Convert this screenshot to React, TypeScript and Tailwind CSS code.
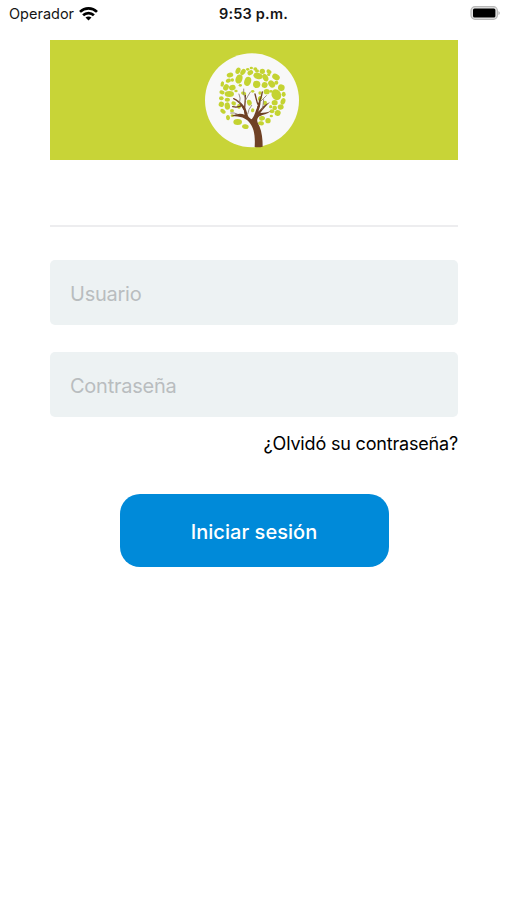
import React from 'react';

// [cx, cy, rx, ry, rotation]
const LEAVES: number[][] = [
  [90, 75, 10, 7, -15], [114, 62, 7, 10, 25], [129, 66, 7, 10, 35], [151, 68, 9, 7, -35], [143, 58, 5, 4, 0],
  [154, 54, 5, 4, 0], [166, 57, 6, 5, 0], [174, 78, 14, 9, 15], [171, 63, 6, 5, 0], [187, 64, 8, 8, 0],
  [207, 65, 8, 6, 30], [228, 81, 12, 9, 30], [206, 74, 5, 4, 0], [196, 83, 8, 12, -30],
  [117, 87, 10, 14, 20], [143, 94, 10, 14, 20], [85, 92, 8, 6, -20], [97, 90, 5, 5, 0], [67, 102, 5, 8, 15],
  [97, 113, 10, 8, -15], [78, 112, 8, 10, 30], [121, 106, 5, 4, 0], [170, 103, 11, 11, 0], [194, 105, 9, 9, 20],
  [215, 102, 9, 12, -40], [229, 98, 6, 6, 0], [244, 113, 10, 10, 10], [88, 132, 14, 9, 0], [66, 127, 8, 6, 15],
  [108, 123, 5, 4, 0], [64, 145, 7, 6, 0], [200, 125, 9, 8, 0], [229, 134, 14, 17, -25], [251, 133, 6, 8, 0],
  [213, 124, 5, 4, 0], [180, 129, 5, 5, 0], [131, 130, 8, 5, 20], [158, 124, 5, 4, 0], [82, 149, 8, 6, 0],
  [64, 163, 8, 8, 20], [82, 168, 8, 11, -10], [101, 160, 7, 6, 20], [148, 158, 7, 9, -20], [180, 145, 6, 8, 30],
  [195, 159, 6, 7, 0], [224, 158, 9, 8, 0], [249, 154, 7, 10, 20], [242, 171, 9, 8, -20], [224, 174, 7, 7, 0],
  [212, 170, 5, 5, 0], [69, 184, 9, 6, 35], [96, 182, 6, 5, 0], [117, 169, 6, 8, 0], [158, 181, 5, 6, 20],
  [216, 184, 7, 6, 0], [233, 189, 9, 9, 20], [84, 203, 6, 8, -10], [113, 216, 13, 9, 0], [136, 230, 10, 7, 10],
  [97, 197, 5, 4, 0], [186, 205, 9, 7, -15], [204, 212, 8, 8, 0], [183, 220, 9, 6, 10], [214, 198, 5, 4, 0],
];

const TreeLogo: React.FC = () => (
  <svg className="w-[95px] h-[95px]" viewBox="15 9 285 285" fill="none">
    <circle cx="156" cy="151" r="141" fill="#f8f8f8" />
    <g fill="#c4d332">
      {LEAVES.map(([cx, cy, rx, ry, angle], i) => (
        <ellipse key={i} cx={cx} cy={cy} rx={rx} ry={ry} transform={`rotate(${angle} ${cx} ${cy})`} />
      ))}
    </g>
    <path
      d="M164 291C166 259 163 234 147 216C137 204 123 199 94 198C112 190 123 190 134 194C132 177 127 166 113 150C131 163 139 176 143 195C145 201 149 205 155 208C161 202 164 193 168 181C173 169 178 160 180 140C185 160 179 171 175 185C184 174 194 163 210 156C197 170 189 177 181 189C193 188 201 188 212 183C201 195 183 193 175 202C168 210 173 218 178 228C186 247 188 268 188 290C180 292 172 292 164 291Z"
      fill="#6f4125"
    />
    <g stroke="#6f4125" strokeLinecap="round" fill="none">
      <path strokeWidth="4" d="M137 195C130 178 137 160 136 136M132 178C122 160 114 151 101 146M126 166C118 171 107 172 98 170M172 180C173 158 185 146 187 126M177 170C169 156 169 145 165 132" />
      <path strokeWidth="2.5" stroke="#88776b" d="M136 152Q143 138 151 126M136 145Q128 133 131 117M119 157Q123 144 117 132M181 155L199 137M186 178Q190 168 191 149M112 192Q103 187 92 189M143 192Q145 177 155 166" />
    </g>
  </svg>
);

const WifiIcon: React.FC = () => (
  <svg className="w-[19px] h-[14px]" viewBox="0 0 19 14" fill="none" stroke="#000" strokeWidth="2.7">
    <path d="M1 4.9C5.8.2 13.2.2 18 4.9" />
    <path d="M4.1 8.2C7.1 5.3 11.9 5.3 14.9 8.2" />
    <path d="M9.5 13.5L6.5 10.6C8.2 9 10.8 9 12.5 10.6Z" fill="#000" stroke="none" />
  </svg>
);

const BatteryIcon: React.FC = () => (
  <svg className="w-[31px] h-[15px]" viewBox="0 0 31 15" fill="none">
    <rect x="1" y=".7" width="26.4" height="12.6" rx="4" fill="#e4e4e4" stroke="#b8b8b8" strokeWidth="1.2" />
    <rect x="3" y="2.6" width="22.4" height="8.8" rx="1.5" fill="#000" />
    <path d="M28.5 4.9Q31 7 28.5 9.1Z" fill="#aaa" />
  </svg>
);

const StatusBar: React.FC = () => (
  <header className="grid grid-cols-3 items-center h-[27px] pl-[9px] pr-[6px] text-[#151515]">
    <div className="flex items-center gap-[5px]">
      <span className="text-[14.5px]">Operador</span>
      <WifiIcon />
    </div>
    <span className="pr-[3px] text-center text-[14.5px] font-semibold tracking-[0.2px] whitespace-nowrap">9:53 p.m.</span>
    <div className="flex justify-end">
      <BatteryIcon />
    </div>
  </header>
);

const inputClass =
  'block w-full h-[65px] px-5 pt-0.5 rounded-[5px] bg-[#edf2f3] text-[20px] tracking-[-0.25px] text-black placeholder:text-[#b9bdbf] outline-none';

export default function App() {
  return (
    <div className="min-h-[900px] bg-white font-['Inter','Liberation_Sans',sans-serif] text-black">
      <StatusBar />
      <main className="pt-[13px] pl-[50px] pr-[49px]">
        <div className="flex items-center justify-center h-[120px] pr-[3px] bg-[#c8d437]">
          <TreeLogo />
        </div>
        <hr className="mt-[65px] border-t-2 border-[#ededef]" />

        <form className="flex flex-col pt-[33.4px]">
          <input type="text" placeholder="Usuario" className={inputClass} />
          <input type="password" placeholder="Contraseña" className={`${inputClass} mt-[27px]`} />
          <a href="#" className="self-end mt-[12.6px] text-[18px] leading-7 tracking-[-0.18px] whitespace-nowrap">
            ¿Olvidó su contraseña?
          </a>
          <button
            type="button"
            className="self-center w-[269px] h-[73px] mt-[36.4px] pt-0.5 rounded-[20px] bg-[#008ad9] text-[20px] font-medium tracking-[0.05px] text-white"
          >
            Iniciar sesión
          </button>
        </form>
      </main>
    </div>
  );
}
